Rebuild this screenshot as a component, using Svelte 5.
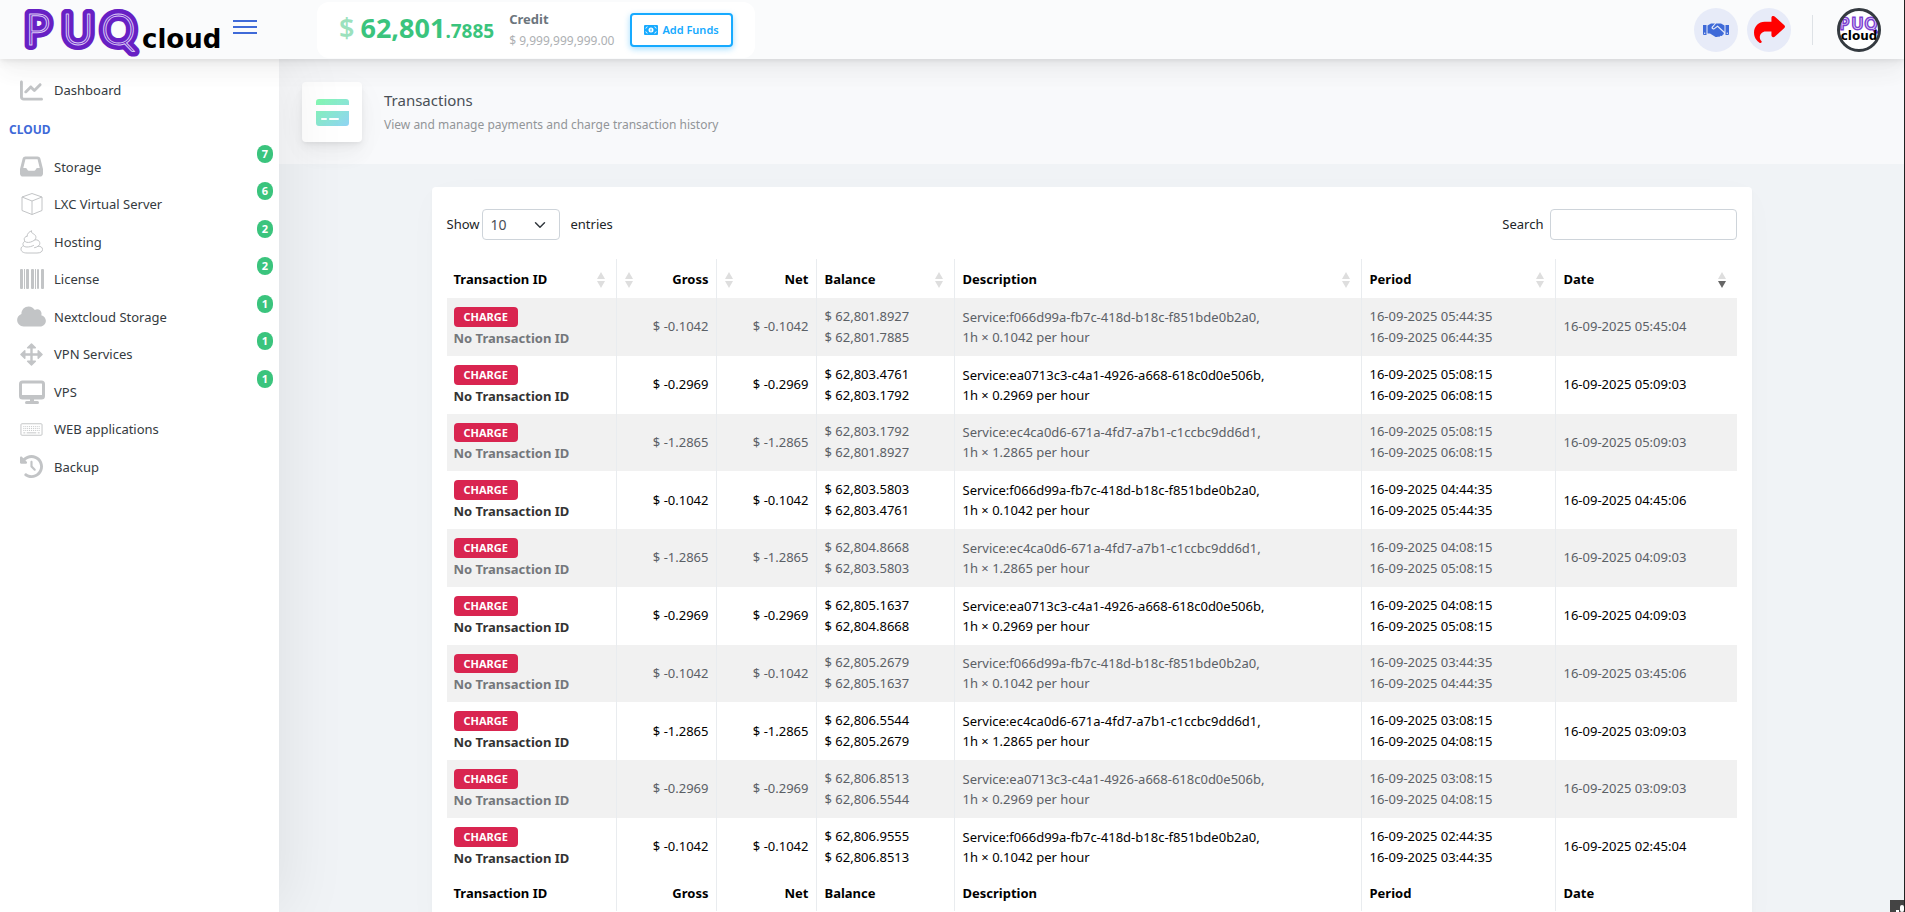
<script lang="ts">
  type Icon = 'chart' | 'inbox' | 'cube' | 'swirl' | 'barcode' | 'cloud' | 'arrows' | 'desktop' | 'keyboard' | 'history'

  const services: { label: string; icon: Icon; count?: number }[] = [
    { label: 'Storage', icon: 'inbox', count: 7 },
    { label: 'LXC Virtual Server', icon: 'cube', count: 6 },
    { label: 'Hosting', icon: 'swirl', count: 2 },
    { label: 'License', icon: 'barcode', count: 2 },
    { label: 'Nextcloud Storage', icon: 'cloud', count: 1 },
    { label: 'VPN Services', icon: 'arrows', count: 1 },
    { label: 'VPS', icon: 'desktop', count: 1 },
    { label: 'WEB applications', icon: 'keyboard' },
    { label: 'Backup', icon: 'history' },
  ]

  const columns = [
    { title: 'Transaction ID', cls: 'col-id' },
    { title: 'Gross', cls: 'col-amount', right: true },
    { title: 'Net', cls: 'col-amount', right: true },
    { title: 'Balance', cls: 'col-balance' },
    { title: 'Description', cls: 'col-description' },
    { title: 'Period', cls: 'col-period' },
    { title: 'Date', cls: 'col-date', sorted: true },
  ]

  const F066 = 'f066d99a-fb7c-418d-b18c-f851bde0b2a0'
  const EA07 = 'ea0713c3-c4a1-4926-a668-618c0d0e506b'
  const EC4C = 'ec4ca0d6-671a-4fd7-a7b1-c1ccbc9dd6d1'

  const rows = [
    { amount: '0.1042', before: '62,801.8927', after: '62,801.7885', service: F066, from: '05:44:35', to: '06:44:35', date: '05:45:04' },
    { amount: '0.2969', before: '62,803.4761', after: '62,803.1792', service: EA07, from: '05:08:15', to: '06:08:15', date: '05:09:03' },
    { amount: '1.2865', before: '62,803.1792', after: '62,801.8927', service: EC4C, from: '05:08:15', to: '06:08:15', date: '05:09:03' },
    { amount: '0.1042', before: '62,803.5803', after: '62,803.4761', service: F066, from: '04:44:35', to: '05:44:35', date: '04:45:06' },
    { amount: '1.2865', before: '62,804.8668', after: '62,803.5803', service: EC4C, from: '04:08:15', to: '05:08:15', date: '04:09:03' },
    { amount: '0.2969', before: '62,805.1637', after: '62,804.8668', service: EA07, from: '04:08:15', to: '05:08:15', date: '04:09:03' },
    { amount: '0.1042', before: '62,805.2679', after: '62,805.1637', service: F066, from: '03:44:35', to: '04:44:35', date: '03:45:06' },
    { amount: '1.2865', before: '62,806.5544', after: '62,805.2679', service: EC4C, from: '03:08:15', to: '04:08:15', date: '03:09:03' },
    { amount: '0.2969', before: '62,806.8513', after: '62,806.5544', service: EA07, from: '03:08:15', to: '04:08:15', date: '03:09:03' },
    { amount: '0.1042', before: '62,806.9555', after: '62,806.8513', service: F066, from: '02:44:35', to: '03:44:35', date: '02:45:04' },
  ]

  const day = '16-09-2025'

  let pageSize = $state('10')
  let search = $state('')
</script>

{#snippet navIcon(name: Icon)}
  {#if name === 'chart'}
    <svg viewBox="0 0 512 512" width="23" height="23" fill="currentColor">
      <path d="M64 64c0-17.700-14.300-32-32-32S0 46.300 0 64V400c0 44.200 35.800 80 80 80H480c17.700 0 32-14.300 32-32s-14.300-32-32-32H80c-8.800 0-16-7.200-16-16V64zm406.600 86.600c12.500-12.500 12.500-32.800 0-45.300s-32.800-12.500-45.300 0L320 210.700l-57.400-57.400c-12.500-12.500-32.800-12.500-45.300 0l-112 112c-12.500 12.500-12.500 32.800 0 45.300s32.800 12.500 45.300 0L240 221.300l57.400 57.400c12.500 12.500 32.800 12.500 45.300 0l128-128z" />
    </svg>
  {:else if name === 'inbox'}
    <svg viewBox="0 0 512 512" width="23" height="23" fill="currentColor">
      <path d="M121 32C91.600 32 66 52 58.900 80.500L1.900 308.400C.6 313.500 0 318.700 0 323.900V416c0 35.300 28.700 64 64 64H448c35.300 0 64-28.700 64-64V323.900c0-5.200-.6-10.400-1.900-15.500l-57-227.900C446 52 420.400 32 391 32H121zm0 64H391l48 192H387.800c-12.100 0-23.200 6.800-28.600 17.700l-14.300 28.600c-5.400 10.800-16.500 17.700-28.600 17.700H195.800c-12.100 0-23.200-6.800-28.600-17.700l-14.300-28.600c-5.400-10.800-16.500-17.700-28.600-17.700H73L121 96z" />
    </svg>
  {:else if name === 'cube'}
    <svg viewBox="0 0 24 24" width="24" height="24" fill="none" stroke="currentColor" stroke-linejoin="round">
      <path d="M12 1.500 22 5v13.500L12 22.500 2 18.500V5zM2 5l10 4 10-4M12 9v13.500" />
    </svg>
  {:else if name === 'swirl'}
    <svg viewBox="0 0 24 24" width="24" height="24" fill="none" stroke="currentColor" stroke-linecap="round">
      <path d="M11.500 1c-2 .3-4.300 2.300-4.500 5.200M11.500 1c-.4 1.800.5 2 2.200 3 2.300 1.300 3 3.600 1.300 5.800M7 6.200C5.200 6.500 3.800 8 4.300 10c.3 1.200 1.200 2 2.400 2.300 2.300.5 5.300-.3 8.300-2.500 2.500-.2 4.300.9 4.700 2.700.4 1.700-.3 2.900-1.700 3.700M4.500 11.500c-1.700 1-2 2.800-1 4.200.8 1 2 1.300 3.500 1.300 2.500 0 4.500-.5 6.500-1.500M3.500 15.800C1.800 16.300 1 17.600 1 19c0 2.700 2.500 4 6 4h10c3.500 0 5.500-1.300 5.500-3.500s-1.700-3.300-4.500-3.300c-1 .8-2.300 1.300-3.500 1.500" />
    </svg>
  {:else if name === 'barcode'}
    <svg viewBox="0 0 24 24" width="24" height="24" fill="currentColor">
      <rect x="0" y="2" width="3" height="20" rx="1" />
      <rect x="4" y="2" width="1" height="20" />
      <rect x="6" y="2" width="3" height="20" rx="1" />
      <rect x="11" y="2" width="3" height="20" rx="1" />
      <rect x="15" y="2" width="1" height="20" />
      <rect x="17" y="2" width="2" height="20" rx="1" />
      <rect x="21" y="2" width="3" height="20" rx="1" />
    </svg>
  {:else if name === 'cloud'}
    <svg viewBox="0 0 640 512" width="29" height="23" fill="currentColor">
      <path d="M0 336c0 79.500 64.500 144 144 144H512c70.700 0 128-57.300 128-128c0-61.900-44-113.600-102.400-125.400c4.100-10.700 6.400-22.400 6.400-34.600c0-53-43-96-96-96c-19.700 0-38.100 6-53.300 16.200C367 64.200 315.300 32 256 32C167.600 32 96 103.600 96 192c0 2.700 .1 5.400 .2 8.100C40.200 219.800 0 273.200 0 336z" />
    </svg>
  {:else if name === 'arrows'}
    <svg viewBox="0 0 24 24" width="23" height="23" fill="currentColor" stroke="currentColor" stroke-linejoin="round">
      <path stroke-width="2.500" d="M12 4v16M4 12h16" />
      <path stroke-width="1.500" d="M12 1 8 5h8zM12 23l-4-4h8zM1 12l4-4v8zM23 12l-4-4v8z" />
    </svg>
  {:else if name === 'desktop'}
    <svg viewBox="0 0 26 24" width="26" height="24" fill="none" stroke="currentColor">
      <rect x="1.500" y="2" width="23" height="16" rx="2" stroke-width="3" />
      <path d="M3 16.500h20" stroke-width="3" />
      <path d="M13 18v4" stroke-width="4" />
      <path d="M7.500 22.500h11" stroke-width="3" stroke-linecap="round" />
    </svg>
  {:else if name === 'keyboard'}
    <svg viewBox="0 0 24 24" width="23" height="23" fill="none" stroke="currentColor">
      <rect x="1" y="6" width="22" height="12" rx="1" />
      <path d="M3.500 9h17M3.500 11h17M3.500 13h17" stroke-dasharray="1 1" />
      <path d="M3.500 15.500h2M7 15.500h10M18.500 15.500h2" />
    </svg>
  {:else}
    <svg viewBox="0 0 512 512" width="23" height="23" fill="currentColor">
      <path d="M75 75L41 41C25.900 25.900 0 36.600 0 57.900V168c0 13.300 10.700 24 24 24H134.100c21.400 0 32.100-25.900 17-41l-30.800-30.800C155 85.500 203 64 256 64c106 0 192 86 192 192s-86 192-192 192c-40.800 0-78.600-12.700-109.700-34.400c-14.500-10.100-34.400-6.600-44.600 7.900s-6.600 34.400 7.900 44.600C151.200 495 201.700 512 256 512c141.400 0 256-114.600 256-256S397.400 0 256 0C185.300 0 121.300 28.700 75 75zm181 53c-13.300 0-24 10.700-24 24V256c0 6.400 2.500 12.500 7 17l72 72c9.400 9.400 24.600 9.400 33.900 0s9.400-24.600 0-33.900l-65-65V152c0-13.300-10.700-24-24-24z" />
    </svg>
  {/if}
{/snippet}

<div class="shell">
  <header class="topbar">
    <div class="brand">
      <a href="#home" aria-label="PUQcloud">
        <svg class="logo" viewBox="0 0 200 44" width="200" height="44">
          <g class="logo-outer"><text x="0 37 76" y="37">PUQ</text></g>
          <g class="logo-line"><text x="0 37 76" y="37">PUQ</text></g>
          <text class="logo-cloud" x="117" y="40">cloud</text>
        </svg>
      </a>
      <button class="burger" aria-label="Toggle menu"><span></span><span></span><span></span></button>
    </div>

    <div class="wallet">
      <div class="balance"><span class="currency">$</span><span>62,801<small>.7885</small></span></div>
      <div class="credit">
        <strong>Credit</strong>
        <span>$ 9,999,999,999.00</span>
      </div>
      <button class="add-funds">
        <svg viewBox="0 0 14 10" width="14" height="10">
          <rect width="14" height="10" rx="1" fill="currentColor" />
          <path d="M1.500 3.200A2 2 0 0 0 3.200 1.500M10.800 1.500a2 2 0 0 0 1.700 1.700M1.500 6.800a2 2 0 0 1 1.700 1.700M10.800 8.500a2 2 0 0 1 1.700-1.700" fill="none" stroke="#fff" />
          <circle cx="7" cy="5" r="2.500" fill="#fff" />
          <path d="M7 3.700v2.600" stroke="currentColor" />
        </svg>
        Add Funds
      </button>
    </div>

    <div class="actions">
      <button class="round" aria-label="Partners">
        <svg viewBox="0 0 26 16" width="26" height="16" fill="#3f6ad8">
          <path d="M0 3h3.500v10H1a1 1 0 0 1-1-1zM22.500 3H26v9a1 1 0 0 1-1 1h-2.500z" />
          <path d="M4.500 3.500 8 1.500h4L9 4.500c-.8.900-.6 2 .2 2.600.8.500 1.700.4 2.500-.2L14.500 5l6 5.500c.8.900.3 2-.7 2.200-.4 1-1.300 1.400-2.200 1.100-.7 1-1.700 1.200-2.600.6-.9.900-2.300.8-3.200.1L7 11.500H4.500z" />
          <path d="M13 1.500h5l3.500 2v6.200L14.600 3.600 11 6.200c-.9.500-1.600-.3-1-1z" />
          <circle cx="1.700" cy="11.300" r=".7" fill="#e7ebf8" />
          <circle cx="24.300" cy="11.300" r=".7" fill="#e7ebf8" />
        </svg>
      </button>
      <button class="round" aria-label="Share">
        <svg viewBox="0 0 512 512" width="31" height="31" fill="#f00">
          <path d="M307 34.800c-11.500 5.100-19 16.600-19 29.200v64H176C78.800 128 0 206.800 0 304C0 417.300 81.500 467.900 100.200 478.100c2.500 1.400 5.300 1.900 8.100 1.900c10.900 0 19.700-8.900 19.700-19.700c0-7.500-4.300-14.400-9.800-19.500C108.800 431.900 96 414.400 96 384c0-53 43-96 96-96h96v64c0 12.600 7.400 24.100 19 29.200s25 3 34.400-5.400l160-144c6.700-6.100 10.600-14.700 10.600-23.800s-3.800-17.700-10.600-23.800l-160-144c-9.400-8.500-22.900-10.600-34.400-5.400z" />
        </svg>
      </button>
      <span class="divider"></span>
      <button class="avatar" aria-label="Account">
        <svg viewBox="0 0 44 44" width="44" height="44">
          <clipPath id="avatar-clip"><circle cx="22" cy="22" r="20" /></clipPath>
          <circle cx="22" cy="22" r="20" fill="#fff" />
          <g clip-path="url(#avatar-clip)">
            <g class="mini-outer"><text x="3 15 28" y="21">PUQ</text></g>
            <g class="mini-line"><text x="3 15 28" y="21">PUQ</text></g>
            <text class="mini-cloud" x="22" y="32" text-anchor="middle">cloud</text>
          </g>
          <circle cx="22" cy="22" r="20.500" fill="none" stroke="#343a40" stroke-width="3" />
        </svg>
      </button>
    </div>
  </header>

  <div class="body">
    <nav class="sidebar">
      <a class="nav-item" href="#dashboard">
        <span class="nav-icon">{@render navIcon('chart')}</span>Dashboard
      </a>
      <h5 class="nav-heading">CLOUD</h5>
      {#each services as s}
        <a class="nav-item" href="#service">
          <span class="nav-icon">{@render navIcon(s.icon)}</span>{s.label}
          {#if s.count}
            <span class="count">{s.count}</span>
          {/if}
        </a>
      {/each}
    </nav>

    <main>
      <div class="page-title">
        <div class="title-icon">
          <svg viewBox="0 0 33 27" width="33" height="27">
            <defs>
              <linearGradient id="card-fill" x1="0" y1="0" x2="1" y2="1">
                <stop offset="0" stop-color="#84fab0" />
                <stop offset="1" stop-color="#8fd3f4" />
              </linearGradient>
            </defs>
            <path fill="url(#card-fill)" d="M3 0h27a3 3 0 0 1 3 3v3H0V3a3 3 0 0 1 3-3zM0 12h33v12a3 3 0 0 1-3 3H3a3 3 0 0 1-3-3z" />
            <path d="M6 20h4M14 20h8" stroke="#fff" stroke-width="2" stroke-linecap="round" />
          </svg>
        </div>
        <div>
          <h1>Transactions</h1>
          <p>View and manage payments and charge transaction history</p>
        </div>
      </div>

      <section class="card">
        <div class="tools">
          <div class="length">
            <label for="page-size">Show</label>
            <select id="page-size" bind:value={pageSize}>
              <option>10</option>
              <option>25</option>
              <option>50</option>
              <option>100</option>
            </select>
            <span class="entries">entries</span>
          </div>
          <div class="search">
            <label for="search">Search</label>
            <input id="search" type="search" bind:value={search} />
          </div>
        </div>

        <table>
          <thead>
            <tr>
              {#each columns as c}
                <th class={c.cls} class:right={c.right}>
                  <div class="head">
                    <span>{c.title}</span>
                    <svg viewBox="0 0 8 16" width="8" height="16">
                      <path d="M4 0 8 7H0z" fill="#dedede" />
                      <path d="M0 9h8l-4 7z" fill={c.sorted ? '#666' : '#dedede'} />
                    </svg>
                  </div>
                </th>
              {/each}
            </tr>
          </thead>
          <tbody>
            {#each rows as r}
              <tr>
                <td>
                  <span class="charge">CHARGE</span>
                  <strong>No Transaction ID</strong>
                </td>
                <td class="right">$ -{r.amount}</td>
                <td class="right">$ -{r.amount}</td>
                <td>$ {r.before}<br />$ {r.after}</td>
                <td class="description">Service:{r.service},<br />1h × {r.amount} per hour</td>
                <td>{day} {r.from}<br />{day} {r.to}</td>
                <td>{day} {r.date}</td>
              </tr>
            {/each}
          </tbody>
          <tfoot>
            <tr>
              {#each columns as c}
                <th class:right={c.right}>{c.title}</th>
              {/each}
            </tr>
          </tfoot>
        </table>
      </section>
    </main>
  </div>

  <button class="corner" aria-label="Activity">
    <svg viewBox="0 0 14 12" width="14" height="12" fill="#fff">
      <rect x="6" y="10" width="3" height="2" />
      <rect x="10" y="5" width="4" height="7" rx="2" />
    </svg>
  </button>
</div>

<style>
  :global(body) {
    margin: 0;
    font-family: 'Noto Sans', 'Open Sans', sans-serif;
    font-size: 13px;
    line-height: 21px;
    color: #212529;
  }

  button,
  select,
  input {
    font: inherit;
  }

  .shell {
    display: flex;
    flex-direction: column;
    height: 100vh;
    box-sizing: border-box;
    border-right: 1px solid #222;
    overflow: hidden;
    position: relative;
    background: #f0f3f6;
  }

  /* Top bar */
  .topbar {
    display: flex;
    align-items: center;
    height: 59px;
    flex-shrink: 0;
    z-index: 10;
    background: #fafbfc;
    box-shadow:
      0 7px 35px rgba(4, 9, 20, 0.03),
      0 15px 22px rgba(4, 9, 20, 0.03),
      0 4px 8px rgba(4, 9, 20, 0.05),
      0 2px 3px rgba(4, 9, 20, 0.03);
  }

  .brand {
    display: flex;
    align-items: flex-start;
    gap: 8px;
    width: 292px;
    padding-left: 25px;
    flex-shrink: 0;
  }
  .logo { display: block; overflow: visible; }
  .logo-outer,
  .logo-line {
    font: 300 44px Lato, sans-serif;
    stroke-linejoin: round;
  }
  .logo-outer { fill: #6720c4; stroke: #6720c4; stroke-width: 10px; }
  .logo-line { fill: #6720c4; stroke: #d9c8f4; stroke-width: 1px; }
  .logo-cloud { font: 700 26px 'DejaVu Sans', sans-serif; fill: #000; }

  .burger {
    display: flex;
    flex-direction: column;
    gap: 4px;
    width: 24px;
    margin-top: 12px;
    padding: 0;
    border: 0;
    background: none;
  }
  .burger span { height: 2px; background: #3f6ad8; }

  .wallet {
    display: flex;
    align-items: center;
    height: 56px;
    padding: 0 22px;
    border-radius: 12px;
    background: #fff;
  }
  .balance {
    display: flex;
    align-items: baseline;
    gap: 6px;
    margin-right: 15px;
    font-size: 27px;
    line-height: 32px;
    font-weight: 700;
    color: #3ac47d;
  }
  .balance small { font-size: 19px; }
  .currency { opacity: 0.5; font-weight: 600; }
  .credit {
    display: flex;
    flex-direction: column;
    margin-right: 16px;
    font-size: 12px;
    color: #adb0b3;
  }
  .credit strong { font-size: 13px; color: #6c757d; }
  .add-funds {
    display: flex;
    align-items: center;
    gap: 4px;
    height: 34px;
    padding: 0 12px;
    border: 2px solid #16aaff;
    border-radius: 4px;
    background: #fff;
    color: #16aaff;
    font-size: 11px;
    font-weight: 600;
    box-shadow: 0 2px 6px rgba(22, 170, 255, 0.4);
  }

  .actions {
    display: flex;
    align-items: center;
    margin-left: auto;
    padding-right: 23px;
  }
  .round {
    display: flex;
    align-items: center;
    justify-content: center;
    width: 44px;
    height: 44px;
    margin-right: 9px;
    padding: 0;
    border: 0;
    border-radius: 50%;
    background: #e7ebf8;
  }
  .divider {
    width: 1px;
    height: 30px;
    margin: 0 24px 0 12px;
    background: #dee2e6;
  }
  .avatar { padding: 0; border: 0; background: none; }
  .avatar svg { display: block; }
  .mini-outer,
  .mini-line { font: 300 15px Lato, sans-serif; }
  .mini-outer { fill: #7b3fd0; stroke: #7b3fd0; stroke-width: 3px; }
  .mini-line { fill: #e6dcf8; }
  .mini-cloud { font: 700 12px 'DejaVu Sans', sans-serif; fill: #000; }

  .body { display: flex; flex: 1; min-height: 0; }

  /* Sidebar */
  .sidebar {
    width: 279px;
    flex-shrink: 0;
    box-sizing: border-box;
    padding: 15px 6px 0 9px;
    z-index: 5;
    background: #fff;
    box-shadow: 7px 0 60px rgba(8, 10, 12, 0.08);
  }
  .nav-item {
    display: flex;
    align-items: center;
    position: relative;
    margin-bottom: 5px;
    line-height: 2.5;
    color: #343a40;
    text-decoration: none;
  }
  .nav-icon {
    display: flex;
    justify-content: center;
    width: 45px;
    color: #c2c4c6;
  }
  .nav-icon svg { display: block; }
  .nav-heading {
    margin: 12px 0 10px;
    font-size: 12px;
    line-height: 22px;
    font-weight: 700;
    color: #3f6ad8;
  }
  .count {
    position: absolute;
    top: -6px;
    right: 0;
    width: 16px;
    height: 18px;
    border-radius: 8px;
    background: #3ac47d;
    color: #fff;
    font-size: 11px;
    line-height: 18px;
    font-weight: 700;
    text-align: center;
  }

  /* Page */
  main {
    flex: 1;
    min-width: 0;
    overflow-y: auto;
    scrollbar-width: none;
  }
  .page-title {
    display: flex;
    align-items: center;
    gap: 22px;
    padding: 23px 23px 22px;
    background: #f8f9fb;
  }
  .title-icon {
    display: flex;
    align-items: center;
    justify-content: center;
    width: 60px;
    height: 60px;
    border-radius: 4px;
    background: #fff;
    box-shadow:
      0 7px 35px rgba(4, 9, 20, 0.03),
      0 15px 22px rgba(4, 9, 20, 0.03),
      0 4px 8px rgba(4, 9, 20, 0.05),
      0 2px 3px rgba(4, 9, 20, 0.03);
  }
  h1 {
    margin: 0;
    font-size: 15px;
    line-height: 26px;
    font-weight: 400;
    color: #495057;
  }
  .page-title p {
    margin: 0;
    font-size: 12px;
    line-height: 24px;
    color: #929598;
  }

  .card {
    max-width: 1320px;
    margin: 23px auto;
    box-sizing: border-box;
    padding: 22px 15px 24px;
    border-radius: 4px;
    background: #fff;
    box-shadow:
      0 7px 35px rgba(4, 9, 20, 0.02),
      0 2px 3px rgba(4, 9, 20, 0.03);
  }

  .tools { display: flex; justify-content: space-between; margin-bottom: 19px; }
  .length,
  .search { display: flex; align-items: center; }
  .length { gap: 2px; }
  .search { gap: 6px; }
  .entries { margin-left: 9px; }
  select,
  input {
    height: 31px;
    box-sizing: border-box;
    border: 1px solid #ced4da;
    border-radius: 4px;
    background: #fff;
  }
  select {
    width: 78px;
    padding: 0 8px;
    appearance: none;
    font-size: 14px;
    color: #495057;
    background: #fff url("data:image/svg+xml,%3Csvg xmlns='http://www.w3.org/2000/svg' viewBox='0 0 16 16'%3E%3Cpath fill='none' stroke='%23343a40' stroke-linecap='round' stroke-linejoin='round' stroke-width='2' d='m2 5 6 6 6-6'/%3E%3C/svg%3E") no-repeat right 13px center / 12px 12px;
  }
  input { width: 187px; padding: 0 8px; }

  table {
    width: 100%;
    table-layout: fixed;
    border-collapse: separate;
    border-spacing: 0;
  }
  .col-id { width: 170px; }
  .col-amount { width: 100px; }
  .col-balance { width: 138px; }
  .col-period { width: 194px; }
  .col-date { width: 181px; }
  th,
  td {
    box-sizing: border-box;
    padding: 7px 7px 7px 8px;
    border-right: 1px solid #e9ecef;
    text-align: left;
    vertical-align: middle;
    color: #000;
  }
  th:last-child,
  td:last-child { border-right: 0; }
  th:first-child,
  td:first-child { padding-left: 7px; }
  thead th { padding: 10px 11px 8px 8px; }
  thead th.right { padding-right: 7px; }
  .right { text-align: right; }
  .head {
    display: flex;
    align-items: center;
    justify-content: space-between;
  }
  .right .head { flex-direction: row-reverse; }

  tbody tr:nth-child(odd) td { background: #f1f1f1; color: #5b6066; }
  tbody strong { display: block; line-height: 22px; color: #333; }
  tbody tr:nth-child(odd) strong { color: #74777b; }
  .description { line-height: 20px; }
  .charge {
    display: block;
    width: fit-content;
    padding: 3px 10px;
    border-radius: 4px;
    background: #d92550;
    color: #fff;
    font-size: 11px;
    line-height: 1.25;
    font-weight: 700;
  }
  td:first-child { padding-top: 9px; }

  .corner {
    position: absolute;
    right: 0;
    bottom: 0;
    z-index: 20;
    display: flex;
    padding: 0;
    border: 0;
    background: #444;
  }
</style>
